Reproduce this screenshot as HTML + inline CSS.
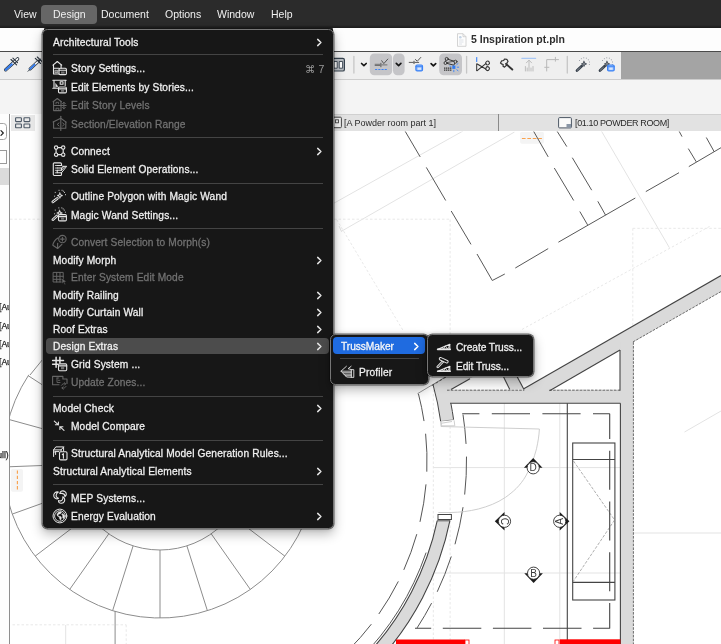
<!DOCTYPE html>
<html><head><meta charset="utf-8"><title>Design menu</title><style>
html,body{margin:0;padding:0;background:#fff}
body{width:721px;height:644px;position:relative;overflow:hidden;font-family:"Liberation Sans", "DejaVu Sans", sans-serif;font-size:10.5px;color:#ececec}
.abs{position:absolute}
#menubar{position:absolute;left:0;top:0;width:721px;height:28px;background:linear-gradient(#2b2b2b 0,#2b2b2b 25px,#1f1f1f 27px,#1c1c1c 28px)}
#menubar span{will-change:transform;position:absolute;top:0;line-height:28.5px;color:#f0f0f0;white-space:nowrap}
#mbhl{position:absolute;left:41px;top:5px;width:55.5px;height:19px;border-radius:4px;background:#666}
#titlebar{position:absolute;left:0;top:28px;width:721px;height:23.300px;background:#fdfdfd;border-bottom:1px solid #4a4a4a}
#title{will-change:transform;position:absolute;left:471px;top:0;line-height:23.5px;color:#2e2e2e;font-weight:700;white-space:nowrap}
#toolbar{position:absolute;left:0;top:52px;width:721px;height:27px;background:#efefef;border-bottom:1px solid #cdcdcd}
#tbgray{position:absolute;left:621px;top:52px;width:100px;height:27px;background:#a4a4a4}
#info{position:absolute;left:0;top:80px;width:721px;height:34px;background:#f4f4f4}
#tabbar{position:absolute;left:60px;top:114px;width:661px;height:17px;background:#e2e2e2;border-top:1px solid #d0d0d0;box-sizing:border-box}
.tabt{will-change:transform;position:absolute;top:114px;line-height:18px;font-size:9px;color:#2a2a2a;white-space:nowrap}
#leftp{position:absolute;left:0;top:114px;width:9.200px;height:530px;background:#fdfdfd;overflow:hidden;color:#222;font-size:9px}
.lt{will-change:transform;position:absolute;left:-1px;line-height:12px;white-space:nowrap;color:#1e1e1e;font-size:8.600px;-webkit-text-stroke:0.250px #1e1e1e}
.menu{position:absolute;background:#171717;border:1.300px solid #767676;box-sizing:border-box;border-radius:5.500px;box-shadow:0 0 0 0.5px rgba(0,0,0,.55),0 5px 12px rgba(0,0,0,.28),0 0 5px rgba(0,0,0,.18)}
.mi{will-change:transform;position:absolute;height:18px;line-height:18px;white-space:nowrap;color:#f0f0f0;font-size:10.200px;letter-spacing:0.130px;-webkit-text-stroke:0.280px #f0f0f0}
.mi.dis{color:#727272;-webkit-text-stroke:0.280px #727272}
.ic{position:absolute;color:#e6e6e6}
.ic.dis{color:#666}
.chev{position:absolute}
.sep{position:absolute;left:52.8px;width:270px;height:1px;background:#444}
.hl{position:absolute;left:46px;width:283px;height:16.5px;border-radius:4px;background:#4c4c4c}
.key{will-change:transform;position:absolute;left:305px;height:18px;line-height:18px;color:#9a9a9a;font-size:10.500px;white-space:nowrap}
</style></head><body>
<div id="titlebar"><div id="title">5 Inspiration pt.pln</div></div>
<div id="toolbar"></div><div id="tbgray"></div>
<div id="info"></div>
<div id="tabbar"></div>
<!--TOOLBAR-->
<svg class="abs" style="left:0;top:52px" width="721" height="27" viewBox="0 52 721 27">
<g fill="none" stroke-linecap="round" stroke-linejoin="round">
<!-- eyedroppers -->
<path d="M5.700 69.800L17.600 58.900" stroke="#2b3540" stroke-width="3.400"/><path d="M5.700 69.800L17.600 58.900" stroke="#fdfdfd" stroke-width="1.700"/><path d="M5.700 69.800L11.800 64.200" stroke="#2f7af0" stroke-width="1.900"/><path d="M11 59.500l5.600 5.300M12.900 58.200l4.600 4.400" stroke="#2b3540" stroke-width="1.100"/>
<path d="M30.200 68.900L38.200 61.300" stroke="#2b3540" stroke-width="3.200"/><path d="M30.200 68.900L38.200 61.300" stroke="#fdfdfd" stroke-width="1.600"/><path d="M30.200 68.900L34.600 64.700" stroke="#2f7af0" stroke-width="1.800"/><path d="M28 71.300l1.800-1.800" stroke="#2b3540" stroke-width="0.900"/><path d="M35.300 58.300l5.300 5.200M37.300 57l4.500 4.400M38.200 61.300l2.300-2.200" stroke="#2b3540" stroke-width="1.100"/>
<!-- double rect -->
<rect x="329.500" y="58.400" width="14.900" height="12.600" rx="1.600" stroke="#36424e" stroke-width="1.200" fill="#b9bec3"/><rect x="334.300" y="61.500" width="2.900" height="6.700" fill="#fff" stroke="#36424e" stroke-width="0.900"/><rect x="339.600" y="61.500" width="3" height="6.700" fill="#fff" stroke="#36424e" stroke-width="0.900"/>
<path d="M353.900 56.300v16.800M466.600 56.300v16.800M567.300 56.300v16.800" stroke="#c6c6c6" stroke-width="1.300"/>
<!-- selected buttons -->
<rect x="369.800" y="53.500" width="22.400" height="21.700" rx="4.500" fill="#c5c5c8" stroke="none"/>
<rect x="393" y="53.500" width="11.600" height="21.700" rx="4.500" fill="#c5c5c8" stroke="none"/>
<rect x="439.200" y="53.500" width="22.800" height="21.700" rx="4.500" fill="#c5c5c8" stroke="none"/>
<!-- chevrons -->
<path d="M361.600 63.500l2.300 2.200 2.300-2.200M396.300 63.400l2.300 2.200 2.300-2.200M431.100 63.600l2.300 2.200 2.300-2.200" stroke="#161616" stroke-width="1.700"/>
<!-- icon in btn1 -->
<path d="M375.100 64.300h4.900M375.100 65.500h4.900M381.800 64.900h5.200" stroke="#5a5a5a" stroke-width="0.800"/><path d="M380.900 63.200v3.600" stroke="#5a5a5a" stroke-width="1"/><path d="M381.700 60.700l2.100 2.900 4-4.500" stroke="#4a4a4a" stroke-width="0.900"/><path d="M375.100 69.500h12" stroke="#3b82f6" stroke-width="1.100" stroke-dasharray="2.100 1.100" stroke-linecap="butt"/>
<!-- icon 3 -->
<path d="M409.200 62.400h4.100M414.800 62.400h3.900" stroke="#4a4a4a" stroke-width="0.900"/><path d="M414 61.200v2.400" stroke="#4a4a4a" stroke-width="1"/><path d="M415.400 59.500l1.900 1.700 3.500-3.800" stroke="#4a4a4a" stroke-width="0.900"/><rect x="415.900" y="65" width="6.600" height="5.900" rx="1.200" stroke="#3b82f6" stroke-width="1.200" fill="#8db8fa"/><path d="M415.900 66.700h6.600" stroke="#3b82f6" stroke-width="0.900"/><rect x="417.600" y="67.600" width="3.400" height="2.200" fill="#d6e6ff" stroke="none"/>
<!-- icon btn3 -->
<path d="M446.700 58.900l8.800 2.800-1.700 3.500-8.300-2.200z" stroke="#333" stroke-width="1"/><path d="M445.500 63l8.800-2" stroke="#333" stroke-width="0.700"/><circle cx="446.700" cy="58.900" r="1.500" fill="#c5c5c8" stroke="#333" stroke-width="0.900"/><circle cx="455.500" cy="61.700" r="1.500" fill="#c5c5c8" stroke="#333" stroke-width="0.900"/><circle cx="445.500" cy="63" r="1.500" fill="#c5c5c8" stroke="#333" stroke-width="0.900"/><path d="M444 68.200h7.500M444 70.200h8" stroke="#333" stroke-width="1.200" stroke-dasharray="1.400 0.600" stroke-linecap="butt"/><rect x="452.300" y="65.500" width="3.100" height="3.400" fill="#2f7af0" stroke="none"/><path d="M456.800 64.500l1.200-0.900M457.200 67.200h1.500M456.800 69.800l1.200 0.900M453.800 70.300v1.400M451 66.500l-1.200-0.500" stroke="#3b82f6" stroke-width="0.900"/>
<!-- scissors -->
<path d="M476.700 57.600v3.800" stroke="#3b82f6" stroke-width="1.100"/><path d="M476.700 63.900v6.800" stroke="#333" stroke-width="1"/><path d="M477.200 64l8.600 5M477.200 70.600l8.600-7" stroke="#333" stroke-width="1.100"/><ellipse cx="487.600" cy="63" rx="1.800" ry="1.900" stroke="#333" stroke-width="1.100" transform="rotate(-30 487.600 63)"/><ellipse cx="487.600" cy="68.600" rx="1.800" ry="1.900" stroke="#333" stroke-width="1.100" transform="rotate(30 487.600 68.600)"/>
<!-- axe -->
<path d="M500.500 63l1.200-2.200 2-0.300 0.800-1.500 2.300 0.300 1.200 2-1 1.500-0.500 2.500-2 1.800-1.500-0.800 0.200-1.800-1.200-0.300z" stroke="#333" stroke-width="1.200"/><path d="M506 63.900l6.300 5.600" stroke="#333" stroke-width="1.900"/>
<!-- disabled icons -->
<path d="M521.900 58.400h13.700" stroke="#a9c8f5" stroke-width="1.200"/><path d="M529 71v-10.400M526.400 62.800l2.600-2.700 2.600 2.700M525.400 66.500v4.500M527.200 68v3M531 68v3M533 66.500v4.500" stroke="#b8b8b8" stroke-width="0.900"/>
<path d="M546.700 71v-11.400h11.800M555.400 57.300v3.900M544.700 67.300h4.200" stroke="#b8b8b8" stroke-width="1"/>
<!-- wands -->
<g id="wnd"><path d="M577 70.500l4.800-4.400" stroke="#39424d" stroke-width="2.700"/><path d="M577.300 70.200l3.600-3.300" stroke="#d8dce0" stroke-width="0.800" stroke-dasharray="0.800 0.700" stroke-linecap="butt"/><path d="M584 61.200l0.800 1.900 1.900 0.800-1.900 0.800-0.800 1.900-0.800-1.900-1.900-0.800 1.900-0.800z" fill="#39424d" stroke="#39424d" stroke-width="0.600"/><circle cx="584" cy="63.900" r="0.700" fill="#efefef" stroke="none"/><path d="M579.500 60.500h0.100M581.300 58.700h0.100M583.700 57.800h0.100M586.300 58.200h0.100M588.300 59.800h0.100M589.400 62h0.100M589.300 64.500h0.100" stroke="#8a9098" stroke-width="0.900"/></g>
<use href="#wnd" x="23"/>
<rect x="607.600" y="65" width="6.600" height="5.900" rx="1.200" stroke="#3b82f6" stroke-width="1.200" fill="#8db8fa"/><path d="M607.600 66.700h6.600" stroke="#3b82f6" stroke-width="0.900"/><rect x="609.300" y="67.600" width="3.400" height="2.200" fill="#d6e6ff" stroke="none"/>
</g></svg>
<svg class="abs" style="left:456px;top:33px" width="11" height="14" viewBox="0 0 11 14"><path d="M1.500 0.700h5.500l3 3v9.600h-8.500z" fill="#fdfdfd" stroke="#c9c9c9" stroke-width="0.800"/><path d="M7 0.700v3h3" fill="none" stroke="#c9c9c9" stroke-width="0.800"/><path d="M3 7h4.500M3 9h4.500M3 11h3" stroke="#d5dbe2" stroke-width="0.800"/><circle cx="4.300" cy="4.300" r="1.300" fill="#c5d4e6"/></svg>
<svg class="abs" style="left:332px;top:116px" width="11" height="13" viewBox="0 0 11 13"><rect x="0.600" y="1.200" width="8.800" height="10.500" rx="1" fill="#f4f4f4" stroke="#444" stroke-width="1"/><rect x="3.500" y="3.800" width="3" height="3" fill="none" stroke="#444" stroke-width="0.900"/></svg>
<svg class="abs" style="left:558px;top:116.500px" width="15" height="12" viewBox="0 0 15 12"><rect x="0.600" y="0.600" width="12.800" height="10.300" rx="1" fill="#fafafa" stroke="#4a5563" stroke-width="1"/><rect x="8.500" y="7" width="4.500" height="3.500" fill="#8a96a6" stroke="none"/></svg>
<div class="abs" style="left:498px;top:114px;width:1px;height:17px;background:#8a8a8a"></div>
<div class="abs" style="left:11px;top:114.500px;width:24px;height:16px;background:#e9e9e9"></div><svg class="abs" style="left:15px;top:117px" width="16" height="12" viewBox="0 0 16 12"><g fill="none" stroke="#4c5866" stroke-width="1.100"><rect x="0.600" y="0.800" width="5.800" height="3.800" rx="0.600"/><rect x="9" y="0.800" width="5.800" height="3.800" rx="0.600"/><rect x="0.600" y="7" width="5.800" height="3.800" rx="0.600"/><rect x="9" y="7" width="5.800" height="3.800" rx="0.600"/></g></svg>
<!--TABS-->
<div class="tabt" style="left:344.4px">[A Powder room part 1]</div>
<div class="tabt" style="left:575px;letter-spacing:-0.37px">[01.10 POWDER ROOM]</div>
<div class="abs" style="left:9.100px;top:114px;width:0.900px;height:530px;background:#8e8e8e"></div>
<div id="leftp">
<div class="abs" style="left:-4px;top:9.300px;width:11px;height:16.500px;border:0.800px solid #a3a3a3;border-radius:3.500px;background:#fff;box-sizing:border-box"></div>
<svg class="abs" style="left:0;top:15.500px" width="5" height="6" viewBox="0 0 5 6"><path d="M1 0.700l2.300 2.300-2.300 2.300" fill="none" stroke="#222" stroke-width="1.200" stroke-linecap="round" stroke-linejoin="round"/></svg>
<div class="abs" style="left:-4px;top:35.500px;width:10.700px;height:14.700px;border:0.800px solid #9a9a9a;background:#fff;box-sizing:border-box"></div>
<div class="abs" style="left:0;top:54.400px;width:9.300px;height:17px;background:#dbdbdb"></div>
<div class="lt" style="top:187.300px">[Aut</div><div class="lt" style="top:205.800px">[Aut</div><div class="lt" style="top:223.800px">[Aut</div><div class="lt" style="top:242px">[Aut</div>
<div class="lt" style="top:335px;left:-8.500px">Full)</div>
</div>
<svg class="abs" style="left:0;top:0" width="721" height="644" viewBox="0 0 721 644"><defs><clipPath id="cv"><rect x="9" y="131.500" width="712" height="513"/></clipPath></defs><g clip-path="url(#cv)">
<g stroke="#e3e3e3" stroke-width="1" fill="none">
<line x1="330.0" y1="205.4" x2="463.0" y2="131.0" />
<line x1="341.0" y1="231.5" x2="514.5" y2="132.0" />
<line x1="339.0" y1="226.0" x2="341.5" y2="231.5" />
<line x1="601.4" y1="131.0" x2="669.4" y2="247.7" />
<line x1="684.5" y1="432.0" x2="721.0" y2="411.0" />
<line x1="504.3" y1="390.0" x2="504.3" y2="644.0" />
<line x1="559.8" y1="390.0" x2="559.8" y2="640.0" />
<line x1="433.0" y1="467.6" x2="633.0" y2="467.6" />
<line x1="433.0" y1="573.0" x2="633.0" y2="573.0" />
<line x1="633.4" y1="533.0" x2="721.0" y2="533.0" />
<line x1="65.7" y1="625.0" x2="65.7" y2="644.0" />
</g>
<g stroke="#e8e8e8" stroke-width="1" fill="none" stroke-dasharray="2.5 2">
<line x1="10.0" y1="219.2" x2="450.0" y2="219.2" />
<line x1="450.1" y1="219.5" x2="450.1" y2="644.0" />
<line x1="433.3" y1="385.0" x2="433.3" y2="644.0" />
<line x1="336.7" y1="219.6" x2="403.4" y2="331.0" />
<line x1="709.6" y1="226.4" x2="521.0" y2="330.0" />
<line x1="632.8" y1="228.3" x2="721.0" y2="228.3" />
<line x1="632.8" y1="228.3" x2="632.8" y2="342.0" />
<line x1="433.0" y1="389.8" x2="633.0" y2="389.8" />
<line x1="12.5" y1="624.8" x2="126.2" y2="624.8" />
<line x1="126.2" y1="624.8" x2="126.2" y2="644.0" />
</g>
<rect x="520.1" y="131.8" width="23.8" height="11.9" rx="1.8" fill="#f4f4f4"/>
<path d="M521.9 138.5H541.9" stroke="#f9a24e" stroke-width="1.15" stroke-dasharray="3.7 1.73" fill="none"/>
<rect x="10.9" y="468.9" width="12.1" height="22.8" rx="1.8" fill="#f4f4f4"/>
<path d="M17.4 470.5V490" stroke="#f9a24e" stroke-width="1.15" stroke-dasharray="3.3 1.9" fill="none"/>
<g stroke="#8c8c8c" stroke-width="1" fill="none">
<path d="M28.8 374.8A157 157 0 1 0 280.3 360.1" fill="none" />
<circle cx="160" cy="461" r="89"/>
<line x1="243.8" y1="491.1" x2="307.8" y2="514.1" />
<line x1="230.8" y1="515.0" x2="284.9" y2="556.2" />
<line x1="211.2" y1="533.8" x2="250.3" y2="589.4" />
<line x1="186.9" y1="545.9" x2="207.4" y2="610.7" />
<line x1="160.0" y1="550.0" x2="160.0" y2="618.0" />
<line x1="133.1" y1="545.9" x2="112.6" y2="610.7" />
<line x1="108.8" y1="533.8" x2="69.7" y2="589.4" />
<line x1="89.2" y1="515.0" x2="35.1" y2="556.2" />
<line x1="76.2" y1="491.1" x2="12.2" y2="514.1" />
<line x1="71.1" y1="464.4" x2="3.1" y2="467.0" />
<line x1="74.2" y1="437.4" x2="8.6" y2="419.4" />
<line x1="85.3" y1="412.6" x2="28.2" y2="375.7" />
<line x1="30.0" y1="375.0" x2="60.0" y2="338.1" />
<line x1="115.1" y1="611.0" x2="115.1" y2="644.0" />
</g>
<g fill="#dadada" stroke="none">
<polygon points="721,275.5 721,291.6 643,335 662.5,325 632.5,342.2 632.5,390 620,390 620,350 549.6,390.7 523.8,388.8 636,325"/>
<polygon points="721,275.5 721,291.6 632.5,342.2 620,350 549.6,390.7 520,390.7 636,325"/>
<rect x="620.4" y="342" width="13" height="302"/>
<rect x="450" y="390" width="171" height="13.3"/>
<polygon points="503.6,377 517.3,377 524,389.5 509.8,389.5"/>
<polygon points="432.5,385 446,376 474.5,376 451,389.5 450,403 441,403"/>
</g>
<path d="M433.1 384.8A283.5 283.5 0 0 1 440.7 421.5L453.6 419.7A296.5 296.5 0 0 0 445.6 381.3Z" fill="#dadada" stroke="none"/>
<path d="M433.1 384.8A283.5 283.5 0 0 1 440.7 421.5" fill="none" stroke="#444" stroke-width="1"/>
<path d="M450.9 403.4A296.5 296.5 0 0 1 453.6 419.7" fill="none" stroke="#444" stroke-width="1"/>
<line x1="440.7" y1="421.5" x2="453.6" y2="419.7" stroke="#8c8c8c" stroke-width="0.9"/>
<path d="M440.7 421.5l0.8 4.3h13.3l-0.7 -5.5" fill="#fff" stroke="#c4c4c4" stroke-width="0.8"/>
<clipPath id="cw"><rect x="300" y="520.6" width="200" height="130"/></clipPath><g clip-path="url(#cw)">
<path d="M439.3 510.2A283.6 283.6 0 0 1 360.5 661.5L369.3 670.3A296 296 0 0 0 451.5 512.4Z" fill="#dadada" stroke="none"/>
<path d="M439.3 510.2A283.6 283.6 0 0 1 360.5 661.5" fill="none" stroke="#444" stroke-width="1.1"/>
<path d="M451.5 512.4A296 296 0 0 1 369.3 670.3" fill="none" stroke="#444" stroke-width="1.1"/>
<path d="M426.1 552.6A281.4 281.4 0 0 1 359.0 660.0" fill="none" stroke="#444" stroke-width="0.9"/>
</g>
<line x1="437.3" y1="520.8" x2="450.0" y2="520.8" stroke="#444" stroke-width="0.9"/>
<rect x="438" y="514.5" width="13.4" height="5" fill="#fff" stroke="#444" stroke-width="1"/>
<path d="M418.4 393.7A267 267 0 0 1 348.8 649.8" fill="none" stroke="#555" stroke-width="1" stroke-dasharray="38 12.700" stroke-dashoffset="10"/>
<path d="M463.0 414.6A306.5 306.5 0 0 1 417.1 627.9" fill="none" stroke="#555" stroke-width="1" stroke-dasharray="38 12.700" stroke-dashoffset="8.500"/>
<line x1="417.5" y1="393.7" x2="447.0" y2="376.0" stroke="#8c8c8c" stroke-width="0.9"/>
<line x1="431.8" y1="385.6" x2="448.0" y2="375.8" stroke="#444" stroke-width="0.9" stroke-dasharray="3 1.5"/>
<g stroke="#444" stroke-width="1.1" fill="none">
<line x1="721.0" y1="275.5" x2="523.8" y2="388.8" />
<line x1="620.0" y1="350.0" x2="549.6" y2="390.7" />
<line x1="620.0" y1="350.0" x2="620.0" y2="390.7" />
<line x1="451.0" y1="389.5" x2="470.0" y2="378.7" />
<line x1="503.6" y1="377.0" x2="509.8" y2="389.5" />
<line x1="517.3" y1="377.0" x2="524.0" y2="389.5" />
<line x1="450.0" y1="403.3" x2="620.4" y2="403.3" />
<line x1="620.4" y1="403.3" x2="620.4" y2="644.0" />
<line x1="567.3" y1="403.3" x2="567.3" y2="640.0" />
<rect x="572.7" y="443" width="42.2" height="157"/>
<line x1="572.7" y1="459.5" x2="614.9" y2="459.5" />
<line x1="572.7" y1="582.4" x2="614.9" y2="582.4" />
</g>
<g stroke="#4a4a4a" stroke-width="0.8" fill="none" stroke-dasharray="2.6 1.2">
<line x1="721.0" y1="291.6" x2="632.5" y2="342.2" />
<line x1="633.4" y1="342.2" x2="633.4" y2="644.0" />
<line x1="447.0" y1="390.2" x2="524.3" y2="390.2" />
<line x1="549.3" y1="390.2" x2="620.0" y2="390.2" />
</g>
<g stroke="#8c8c8c" stroke-width="0.7" fill="none" stroke-dasharray="3 1.5">
<polyline points="573.5,461 614.6,520 573.5,581"/>
</g>
<g stroke="#444" stroke-width="1.1" fill="none">
<path d="M462.2 413.7H609.8" stroke-dasharray="38.2 12.4" stroke-dashoffset="21"/>
<path d="M609.7 413.7V628.4" stroke-dasharray="39 11.8" stroke-dashoffset="13.800"/>
<path d="M415 628.300H609.700" stroke-dasharray="38.500 11.600" stroke-dashoffset="22.300"/>
</g>
<g stroke="#585858" stroke-width="1" fill="none">
<line x1="405.0" y1="131.0" x2="420.2" y2="156.9" />
<line x1="426.3" y1="167.4" x2="445.7" y2="200.5" />
<line x1="451.2" y1="211.0" x2="471.0" y2="244.4" />
<line x1="477.0" y1="254.0" x2="492.3" y2="280.5" />
<line x1="492.3" y1="280.5" x2="504.8" y2="274.0" />
<line x1="515.3" y1="268.0" x2="548.2" y2="248.6" />
<line x1="558.4" y1="242.2" x2="635.3" y2="198.0" />
<line x1="645.8" y1="191.6" x2="679.0" y2="172.7" />
<line x1="688.8" y1="166.6" x2="721.0" y2="147.7" />
<line x1="533.5" y1="131.1" x2="548.2" y2="156.9" />
<line x1="554.3" y1="168.0" x2="573.7" y2="200.5" />
<line x1="579.8" y1="211.5" x2="587.6" y2="224.9" />
<line x1="557.0" y1="131.1" x2="566.8" y2="146.6" />
<line x1="572.3" y1="157.7" x2="591.7" y2="190.2" />
<line x1="597.8" y1="201.3" x2="605.6" y2="215.2" />
<line x1="679.0" y1="131.0" x2="682.0" y2="136.6" />
<line x1="688.3" y1="148.6" x2="696.3" y2="161.9" />
<line x1="706.3" y1="137.5" x2="714.3" y2="151.9" />
</g>
<g stroke="#c8c8c8" stroke-width="0.9" fill="none">
<path d="M441 423.3L452 421.5M441 426.5L539.4 429C539 436 538 442 536.5 448.8C534 458 531 467 525.8 476C520 486 513 492 505.4 497.4C497 503 488 506.5 478.3 509C469 511.3 460 512.3 451 512.5L438.4 512.5"/>
<line x1="441.0" y1="421.0" x2="441.0" y2="426.5" />
</g>
<rect x="396" y="639.5" width="69" height="6" fill="#f00"/>
<rect x="465" y="640" width="4" height="5" fill="none" stroke="#f00" stroke-width="0.8"/>
<rect x="559.7" y="639.3" width="60.7" height="6" fill="#f00"/>
<rect x="555" y="640" width="4" height="5" fill="none" stroke="#f00" stroke-width="0.8"/>
<polygon points="523.9000000000001,467.8 542.5,467.8 533.2,458.1" fill="#1c1c1c"/><circle cx="533.2" cy="467.8" r="6.1" fill="#fff" stroke="#2e2e2e" stroke-width="0.9"/><text x="533.2" y="471.40000000000003" text-anchor="middle" font-size="10" fill="#3a3a3a" font-family='"Liberation Sans", "DejaVu Sans", sans-serif' transform="rotate(0 533.2 467.8)">D</text>
<polygon points="504.5,511.99999999999994 504.5,530.5999999999999 494.8,521.3" fill="#1c1c1c"/><circle cx="504.5" cy="521.3" r="6.1" fill="#fff" stroke="#2e2e2e" stroke-width="0.9"/><text x="504.5" y="524.9" text-anchor="middle" font-size="10" fill="#3a3a3a" font-family='"Liberation Sans", "DejaVu Sans", sans-serif' transform="rotate(90 504.5 521.3)">C</text>
<polygon points="559.7,511.99999999999994 559.7,530.5999999999999 569.4000000000001,521.3" fill="#1c1c1c"/><circle cx="559.7" cy="521.3" r="6.1" fill="#fff" stroke="#2e2e2e" stroke-width="0.9"/><text x="559.7" y="524.9" text-anchor="middle" font-size="10" fill="#3a3a3a" font-family='"Liberation Sans", "DejaVu Sans", sans-serif' transform="rotate(-90 559.7 521.3)">A</text>
<polygon points="524.3000000000001,573.2 542.9,573.2 533.6,582.9000000000001" fill="#1c1c1c"/><circle cx="533.6" cy="573.2" r="6.1" fill="#fff" stroke="#2e2e2e" stroke-width="0.9"/><text x="533.6" y="576.8000000000001" text-anchor="middle" font-size="10" fill="#3a3a3a" font-family='"Liberation Sans", "DejaVu Sans", sans-serif' transform="rotate(0 533.6 573.2)">B</text>
</g></svg>
<div id="menubar"><div id="mbhl"></div>
<span style="left:14px">View</span><span style="left:52.5px">Design</span><span style="left:100.5px">Document</span><span style="left:164.5px">Options</span><span style="left:217px">Window</span><span style="left:270.5px">Help</span></div>
<!--MENUS-->
<div class="abs" style="left:44px;top:28px;width:288.500px;height:4px;background:#232323;border-radius:1px"></div>
<div class="menu" style="left:42.200px;top:29.400px;width:292.300px;height:500.100px"></div>
<div class="mi" style="top:34.0px;left:52.8px">Architectural Tools</div>
<svg class="chev" style="top:37.6px;left:316px" width="7" height="9" viewBox="0 0 7 9"><path d="M1.700 1.400l3.200 3.100-3.200 3.100" fill="none" stroke="#e4e4e4" stroke-width="1.500" stroke-linecap="round" stroke-linejoin="round"/></svg>
<div class="sep" style="top:54.0px"></div>
<svg class="ic" style="top:60.8px;left:52.8px;overflow:visible" width="15" height="15" viewBox="0 0 15 15" fill="none" stroke="currentColor" stroke-width="1.100" stroke-linecap="round" stroke-linejoin="round"><path d="M0 4.100L4.300 0.500L8.700 4.100"/><path d="M0.500 3.800v9.200h5.500M8.100 3.800v3.400M0.500 7.200h5.500"/><rect x="2.200" y="9.300" width="2.600" height="2.400" fill="currentColor" fill-opacity="0.450" stroke-width="0.600"/><rect x="6" y="7.200" width="7.400" height="6.400" rx="1.100"/><path d="M6 9.300h7.400"/><path d="M8 10.500h3.600v2.200h-3.600z" fill="currentColor" fill-opacity="0.450" stroke="none"/></svg>
<div class="mi" style="top:60.0px;left:71.3px">Story Settings...</div>
<div class="key" style="top:60.0px">&#8984; 7</div>
<svg class="ic" style="top:79.2px;left:52.8px;overflow:visible" width="15" height="15" viewBox="0 0 15 15" fill="none" stroke="currentColor" stroke-width="1.100" stroke-linecap="round" stroke-linejoin="round"><path d="M-0.200 1.200h13.400M1 1.200v8M12.200 1.200v5.300M-0.200 9.200h5.600"/><rect x="7.200" y="2.700" width="2.800" height="2.500"/><path d="M2.800 4.800l2.200 3-1.100-0.200-1 0.700z" fill="currentColor" stroke-width="0.500"/><rect x="5.500" y="8" width="7.900" height="5.900" rx="1.100"/><path d="M5.500 9.900h7.900"/><path d="M8 11h3.200v1.800h-3.200z" fill="currentColor" fill-opacity="0.450" stroke="none"/></svg>
<div class="mi" style="top:79.0px;left:71.3px">Edit Elements by Stories...</div>
<svg class="ic dis" style="top:97.9px;left:52.8px;overflow:visible" width="15" height="15" viewBox="0 0 15 15" fill="none" stroke="currentColor" stroke-width="1.100" stroke-linecap="round" stroke-linejoin="round"><path d="M0.100 3.700L4.300 0.500L8.400 3.700"/><path d="M0.600 3.500v9.100h7.400V3.500M0.600 7.500h12.500"/><path d="M3 5.800V4.300h2.600v1.500M3 12.600V10.200h2.800v2.400" stroke-width="0.900"/><path d="M10.900 4.300v6.500M9.500 5.700l1.400-1.400 1.400 1.400M9.500 9.400l1.400 1.400 1.400-1.400" stroke-width="1"/></svg>
<div class="mi dis" style="top:97.0px;left:71.3px">Edit Story Levels</div>
<svg class="ic dis" style="top:116.4px;left:52.8px;overflow:visible" width="15" height="15" viewBox="0 0 15 15" fill="none" stroke="currentColor" stroke-width="1.100" stroke-linecap="round" stroke-linejoin="round"><path d="M0.100 6.100L7.800 2.300L13.100 6.100"/><path d="M0.600 5.900v6.400h12.200V5.900"/><path d="M7.800 0.200v14.200"/><path d="M6 6.900L4.200 8.400L6 9.900M9.600 6.900l1.800 1.500-1.800 1.500" stroke-width="1"/></svg>
<div class="mi dis" style="top:116.0px;left:71.3px">Section/Elevation Range</div>
<div class="sep" style="top:136.8px"></div>
<svg class="ic" style="top:143.5px;left:52.8px;overflow:visible" width="15" height="15" viewBox="0 0 15 15" fill="none" stroke="currentColor" stroke-width="1.100" stroke-linecap="round" stroke-linejoin="round"><path d="M3.100 3.600h7.100v7.100H3.100z" stroke-width="1.200"/><circle cx="3.100" cy="3.600" r="1.700" fill="#181818"/><circle cx="10.200" cy="3.600" r="1.700" fill="#181818"/><circle cx="3.100" cy="10.700" r="1.700" fill="#181818"/><circle cx="10.200" cy="10.700" r="1.700" fill="#181818"/></svg>
<div class="mi" style="top:143.0px;left:71.3px">Connect</div>
<svg class="chev" style="top:146.5px;left:316px" width="7" height="9" viewBox="0 0 7 9"><path d="M1.700 1.400l3.200 3.100-3.200 3.100" fill="none" stroke="#e4e4e4" stroke-width="1.500" stroke-linecap="round" stroke-linejoin="round"/></svg>
<svg class="ic" style="top:161.9px;left:52.8px;overflow:visible" width="15" height="15" viewBox="0 0 15 15" fill="none" stroke="currentColor" stroke-width="1.100" stroke-linecap="round" stroke-linejoin="round"><path d="M1.300 0.900h6.200a1 1 0 0 1 1 1v1.600H4.200M0.300 1.900a1 1 0 0 1 1-1M0.300 1.900v10.600a1 1 0 0 0 1 1h6.200a1 1 0 0 0 1-1V10.800H4.200V8.300h4.300V6H4.200"/><path d="M2.300 3.500h3.500M2.300 6h2M2.300 8.300h2M2.300 10.800h2" stroke-width="0.800"/><path d="M8.500 3.500l1.200 0.800h4l-5.200 6.500M8.500 6l2-1.500M8.500 8.300l3.700-4" stroke-width="1"/></svg>
<div class="mi" style="top:161.0px;left:71.3px">Solid Element Operations...</div>
<div class="sep" style="top:182.5px"></div>
<svg class="ic" style="top:189.1px;left:52.8px;overflow:visible" width="15" height="15" viewBox="0 0 15 15" fill="none" stroke="currentColor" stroke-width="1.100" stroke-linecap="round" stroke-linejoin="round"><path d="M-0.200 12.900L4.400 9.400" stroke-width="2.600"/><path d="M-0.200 12.900L4.400 9.400" stroke="#181818" stroke-width="0.900"/><path d="M6.900 3.700l0.900 2 2 0.900-2 0.900-0.900 2-0.900-2-2-0.900 2-0.900z" fill="currentColor" stroke-width="0.500"/><circle cx="6.900" cy="6.600" r="0.800" fill="#181818" stroke="none"/><path d="M2.200 3.400h0.100M6 1.300h0.100M9 1.300h0.100M11.400 3.400h0.100M12.500 5.700h0.100M1.600 7.200h0.100M10.300 2.200h0.100" stroke-width="1"/></svg>
<div class="mi" style="top:188.0px;left:71.3px">Outline Polygon with Magic Wand</div>
<svg class="ic" style="top:207.4px;left:52.8px;overflow:visible" width="15" height="15" viewBox="0 0 15 15" fill="none" stroke="currentColor" stroke-width="1.100" stroke-linecap="round" stroke-linejoin="round"><path d="M-0.200 12.700L4.100 8.800" stroke-width="2.600"/><path d="M-0.200 12.700L4.100 8.800" stroke="#181818" stroke-width="0.900"/><path d="M6.600 3.100l0.900 2 2 0.900-2 0.900-0.900 2-0.900-2-2-0.900 2-0.900z" fill="currentColor" stroke-width="0.500"/><circle cx="6.600" cy="6" r="0.800" fill="#181818" stroke="none"/><path d="M2.200 3.100h0.100M5.800 0.900h0.100M8.800 0.900h0.100M11.200 3.100h0.100M12.300 5.200h0.100M1.600 6.800h0.100M10.100 1.900h0.100" stroke-width="1"/><rect x="5.500" y="7.600" width="7.900" height="6.300" rx="1.100" fill="#181818"/><path d="M5.500 9.600h7.900"/><path d="M8 10.700h3.200v2h-3.200z" fill="currentColor" fill-opacity="0.450" stroke="none"/></svg>
<div class="mi" style="top:207.0px;left:71.3px">Magic Wand Settings...</div>
<div class="sep" style="top:227.9px"></div>
<svg class="ic dis" style="top:234.9px;left:52.8px;overflow:visible" width="15" height="15" viewBox="0 0 15 15" fill="none" stroke="currentColor" stroke-width="1.100" stroke-linecap="round" stroke-linejoin="round"><path d="M4.900 3C2 4.800 0.300 7.500-0.200 10.200L4.600 13.500L8.900 9.300"/><path d="M4.600 8.300V13.500"/><circle cx="9.400" cy="4.100" r="3.700"/><path d="M9.400 2.300v3.600M7.600 4.100h3.600"/></svg>
<div class="mi dis" style="top:234.0px;left:71.3px">Convert Selection to Morph(s)</div>
<div class="mi" style="top:252.0px;left:52.8px">Modify Morph</div>
<svg class="chev" style="top:255.5px;left:316px" width="7" height="9" viewBox="0 0 7 9"><path d="M1.700 1.400l3.200 3.100-3.200 3.100" fill="none" stroke="#e4e4e4" stroke-width="1.500" stroke-linecap="round" stroke-linejoin="round"/></svg>
<svg class="ic dis" style="top:270.0px;left:52.8px;overflow:visible" width="15" height="15" viewBox="0 0 15 15" fill="none" stroke="currentColor" stroke-width="1.100" stroke-linecap="round" stroke-linejoin="round"><path d="M0.500 2.400h9.700v9.600H0.500zM3.700 2.400v9.600M7 2.400v9.600M0.500 6.300h9.700M0.500 9.300h9.700" stroke-width="1"/><path d="M8.700 8.300l0.300 5.600 1.500-1.400 1.100 2.200 1.100-0.500-1.100-2.200 2.100-0.200z" fill="currentColor" stroke="#171717" stroke-width="0.700"/></svg>
<div class="mi dis" style="top:269.0px;left:71.3px">Enter System Edit Mode</div>
<div class="mi" style="top:287.0px;left:52.8px">Modify Railing</div>
<svg class="chev" style="top:290.5px;left:316px" width="7" height="9" viewBox="0 0 7 9"><path d="M1.700 1.400l3.200 3.100-3.200 3.100" fill="none" stroke="#e4e4e4" stroke-width="1.500" stroke-linecap="round" stroke-linejoin="round"/></svg>
<div class="mi" style="top:304.0px;left:52.8px">Modify Curtain Wall</div>
<svg class="chev" style="top:307.8px;left:316px" width="7" height="9" viewBox="0 0 7 9"><path d="M1.700 1.400l3.200 3.100-3.200 3.100" fill="none" stroke="#e4e4e4" stroke-width="1.500" stroke-linecap="round" stroke-linejoin="round"/></svg>
<div class="mi" style="top:321.0px;left:52.8px">Roof Extras</div>
<svg class="chev" style="top:324.8px;left:316px" width="7" height="9" viewBox="0 0 7 9"><path d="M1.700 1.400l3.200 3.100-3.200 3.100" fill="none" stroke="#e4e4e4" stroke-width="1.500" stroke-linecap="round" stroke-linejoin="round"/></svg>
<div class="hl" style="top:337.8px"></div>
<div class="mi" style="top:338.0px;left:52.8px">Design Extras</div>
<svg class="chev" style="top:341.6px;left:316px" width="7" height="9" viewBox="0 0 7 9"><path d="M1.700 1.400l3.200 3.100-3.200 3.100" fill="none" stroke="#e4e4e4" stroke-width="1.500" stroke-linecap="round" stroke-linejoin="round"/></svg>
<svg class="ic" style="top:356.8px;left:52.8px;overflow:visible" width="15" height="15" viewBox="0 0 15 15" fill="none" stroke="currentColor" stroke-width="1.100" stroke-linecap="round" stroke-linejoin="round"><path d="M3.100 0.200v10M6.900 0.200v5.800M-0.400 3.400h10.900M-0.400 7.200h5.300" stroke-width="1.500"/><rect x="5.500" y="6.900" width="8.200" height="6.800" rx="1.100" fill="#181818"/><path d="M5.500 8.900h8.200"/><path d="M8 10.100h3.200v2.200h-3.200z" fill="currentColor" fill-opacity="0.450" stroke="none"/></svg>
<div class="mi" style="top:356.0px;left:71.3px">Grid System ...</div>
<svg class="ic dis" style="top:375.0px;left:52.8px;overflow:visible" width="15" height="15" viewBox="0 0 15 15" fill="none" stroke="currentColor" stroke-width="1.100" stroke-linecap="round" stroke-linejoin="round"><path d="M6 9.700H-0.400V1.400H9.900V4H14V8.500"/><path d="M4 3v4.500h3M4 3h1.800M5.300 5.300h1.500" stroke-width="0.900"/><path d="M8.400 10.300c0.800-1.500 2.500-2 4-1.500M11.400 7.700l1.300 1.100-1.200 1.300M13 11.500c-0.800 1.500-2.500 2-4 1.500M10.200 14.200l-1.300-1.100 1.200-1.300" stroke-width="0.900"/></svg>
<div class="mi dis" style="top:374.0px;left:71.3px">Update Zones...</div>
<div class="sep" style="top:395.7px"></div>
<div class="mi" style="top:400.0px;left:52.8px">Model Check</div>
<svg class="chev" style="top:404.1px;left:316px" width="7" height="9" viewBox="0 0 7 9"><path d="M1.700 1.400l3.200 3.100-3.200 3.100" fill="none" stroke="#e4e4e4" stroke-width="1.500" stroke-linecap="round" stroke-linejoin="round"/></svg>
<svg class="ic" style="top:419.1px;left:52.8px;overflow:visible" width="15" height="15" viewBox="0 0 15 15" fill="none" stroke="currentColor" stroke-width="1.100" stroke-linecap="round" stroke-linejoin="round"><path d="M1.300 2.100l4.100 3.700M5.400 3v2.800H2.400M11 11.400L6.900 7.700M6.900 10.500V7.700h3" stroke-width="1.100"/></svg>
<div class="mi" style="top:418.0px;left:71.3px">Model Compare</div>
<div class="sep" style="top:439.5px"></div>
<svg class="ic" style="top:446.1px;left:52.8px;overflow:visible" width="15" height="15" viewBox="0 0 15 15" fill="none" stroke="currentColor" stroke-width="1.100" stroke-linecap="round" stroke-linejoin="round"><path d="M0.600 10.500V3.900L2.800 0.900h7.800v4.300M0.600 3.900h7.500l2.500-3M8.100 3.900v1.500M2.600 8.500V5.600h3.200M0.600 6.200l2-0.600" stroke-width="1"/><rect x="6.500" y="5.700" width="7.500" height="8.200" rx="1.200" fill="#181818"/><path d="M10.400 7.600v4.600M9.300 8.700l1.100-1.100" stroke-width="1.100"/></svg>
<div class="mi" style="top:445.0px;left:71.3px">Structural Analytical Model Generation Rules...</div>
<div class="mi" style="top:463.0px;left:52.8px">Structural Analytical Elements</div>
<svg class="chev" style="top:466.5px;left:316px" width="7" height="9" viewBox="0 0 7 9"><path d="M1.700 1.400l3.200 3.100-3.200 3.100" fill="none" stroke="#e4e4e4" stroke-width="1.500" stroke-linecap="round" stroke-linejoin="round"/></svg>
<div class="sep" style="top:483.6px"></div>
<svg class="ic" style="top:490.3px;left:52.8px;overflow:visible" width="15" height="15" viewBox="0 0 15 15" fill="none" stroke="currentColor" stroke-width="1.100" stroke-linecap="round" stroke-linejoin="round"><path d="M5.300 2C2.500 1.500 0.300 3.500 0.800 6.200c0.500 2.300 3 3.300 4.700 2.100-1.800-0.700-2.700-2.300-2.200-3.800 0.300-1 1-1.800 2-2.500z"/><path d="M6.700 3.500C7.200 1 10 0.200 12 1.600c1.800 1.400 1.700 3.800 0 5-0.100-1.800-1.300-3-3-3.200-0.800-0.100-1.600 0-2.300 0.100z"/><path d="M11.300 8.300c1.200 2.300-0.200 4.700-2.700 5-2 0.200-3.300-1-3.100-2.700 1.500 0.800 3.200 0.300 4-1.200 0.400-0.800 0.500-1.700 0.300-2.600 0.600 0.400 1.100 0.900 1.500 1.500z"/></svg>
<div class="mi" style="top:490.0px;left:71.3px">MEP Systems...</div>
<svg class="ic" style="top:508.7px;left:52.8px;overflow:visible" width="15" height="15" viewBox="0 0 15 15" fill="none" stroke="currentColor" stroke-width="1.100" stroke-linecap="round" stroke-linejoin="round"><circle cx="6.900" cy="7" r="6.900" stroke-width="1"/><circle cx="6.900" cy="7" r="5.300" stroke-width="0.900" fill="#0c0c0c"/><path d="M5.300 3.200l2.300-0.700 1.200 1-1.300 1.300-1.900 0.400-0.700 1.300 1.300 0.800 1.700 0.200 0.600 1.500-0.800 2.300-1.300-1.700-0.200-1.500-1.900-1.200-0.400-1.700zM9.800 4.500l1.500 1.700 0.300 2-1.300 1.500-0.800-1.400 0.300-1.500-1-1z" fill="currentColor" stroke-width="0.400"/></svg>
<div class="mi" style="top:508.0px;left:71.3px">Energy Evaluation</div>
<svg class="chev" style="top:511.7px;left:316px" width="7" height="9" viewBox="0 0 7 9"><path d="M1.700 1.400l3.200 3.100-3.200 3.100" fill="none" stroke="#e4e4e4" stroke-width="1.500" stroke-linecap="round" stroke-linejoin="round"/></svg>
<div class="menu" style="left:330px;top:334px;width:99.300px;height:50.700px"></div>
<div class="abs" style="left:333.300px;top:337.400px;width:92.100px;height:16.700px;border-radius:4px;background:#1f6be0"></div>
<div class="mi" style="left:341.200px;top:338px;color:#fff;letter-spacing:-0.050px">TrussMaker</div>
<svg class="chev" style="top:341.800px;left:413px" width="7" height="9" viewBox="0 0 7 9"><path d="M1.700 1.400l3.200 3.100-3.200 3.100" fill="none" stroke="#fff" stroke-width="1.500" stroke-linecap="round" stroke-linejoin="round"/></svg>
<div class="sep" style="left:340.300px;width:78.700px;top:358.300px"></div>
<div class="mi" style="left:359.200px;top:364px">Profiler</div>
<div class="menu" style="left:426.700px;top:334px;width:107.800px;height:43.400px"></div>
<svg class="abs" style="left:436px;top:342px" width="16" height="9" viewBox="436 342 16 9"><g fill="none" stroke="#e8e8e8" stroke-linecap="round" stroke-linejoin="round"><path d="M437.800 349.300L449.800 344.200V349.300Z" stroke-width="1.100"/><path d="M437.600 349.400H450.200" stroke-width="1.600"/><path d="M442.500 347.300l1 2M445.500 346l-2 3.300M445.500 346l2 3.300M447.500 349.300l2.300-4.500" stroke-width="0.800"/></g></svg>
<svg class="abs" style="left:436px;top:357px" width="16" height="16" viewBox="436 357 16 16"><g fill="none" stroke="#e8e8e8" stroke-linecap="round" stroke-linejoin="round"><path d="M437.800 371.200L449.800 366.200V371.200Z" stroke-width="1.100"/><path d="M437.600 371.300H450.200" stroke-width="1.600"/><path d="M442.500 369.300l1 2M445.500 368l-2 3.300M445.500 368l2 3.300M447.500 371.300l2.300-4.500" stroke-width="0.800"/><path d="M437.800 366.900l5-5.200" stroke-width="2.600"/><path d="M437.800 366.900l5-5.200" stroke="#171717" stroke-width="0.900"/><path d="M440.600 358.800l6.200 2.900" stroke-width="3.500"/><path d="M440.600 358.800l6.200 2.900" stroke="#171717" stroke-width="1.700"/></g></svg>
<svg class="abs" style="left:340px;top:365px" width="15" height="14" viewBox="340 365 15 14"><g fill="none" stroke="#e8e8e8" stroke-linecap="round" stroke-linejoin="round" stroke-width="0.900"><path d="M346.400 366.300L341 371.200L346.600 377L353.800 377.400V369.700L351.300 369.600"/><path d="M351.100 366.300L348.100 368.700L351.300 369.600V377.300"/><path d="M341 371.200H351.300M343 372.700H351.300M344 374.200H351.300M345.300 375.700H351.300" stroke-width="0.800"/></g></svg>
<div class="mi" style="left:455.800px;top:339px;letter-spacing:-0.050px">Create Truss...</div>
<div class="mi" style="left:455.800px;top:358px;letter-spacing:-0.050px">Edit Truss...</div>
</body></html>
